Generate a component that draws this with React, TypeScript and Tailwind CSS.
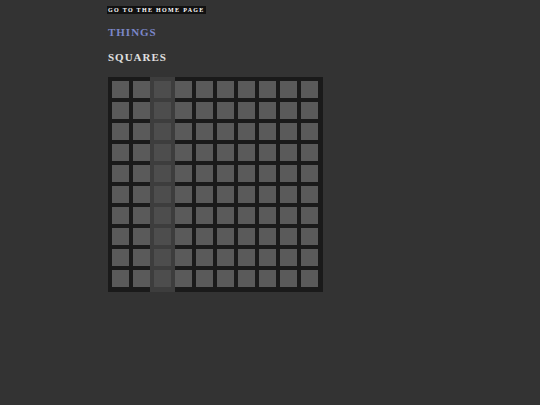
const COLS = 10;
const ROWS = 10;
const ACTIVE_COL = 2;

function Square({ dim }: { dim: boolean }) {
  return (
    <div
      className={`w-[17px] h-[17px] shrink-0 ${dim ? 'bg-[#4d4d4d]' : 'bg-[#5a5a5a]'}`}
    />
  );
}

export default function App() {
  return (
    <div className="min-h-[405px] bg-[#333333] pl-[108px] pt-[6px] font-['Liberation_Serif',serif]">
      <a
        href="#"
        className="block w-fit bg-[#111111] text-white text-[6px] font-bold tracking-[0.22em] leading-[8px] h-[8px] px-[1px] -ml-[1px] uppercase"
      >
        Go to the home page
      </a>

      <h1 className="mt-[11px] text-[11px] font-bold tracking-[0.09em] leading-[14px] text-[#7c87c9]">
        THINGS
      </h1>

      <h2 className="mt-[11px] text-[11px] font-bold tracking-[0.09em] leading-[14px] text-[#e0e0e0]">
        SQUARES
      </h2>

      <div className="mt-[13px] w-[215px] h-[215px] bg-[#1a1a1a] flex gap-[4px] pl-[4px]">
        {Array.from({ length: COLS }).map((_, c) => (
          <div
            key={c}
            className={`flex flex-col gap-[4px] pt-[4px] ${
              c === ACTIVE_COL ? 'bg-[#3d3d3d] -mx-[4px] px-[4px]' : ''
            }`}
          >
            {Array.from({ length: ROWS }).map((_, r) => (
              <Square key={r} dim={c === ACTIVE_COL} />
            ))}
          </div>
        ))}
      </div>
    </div>
  );
}
